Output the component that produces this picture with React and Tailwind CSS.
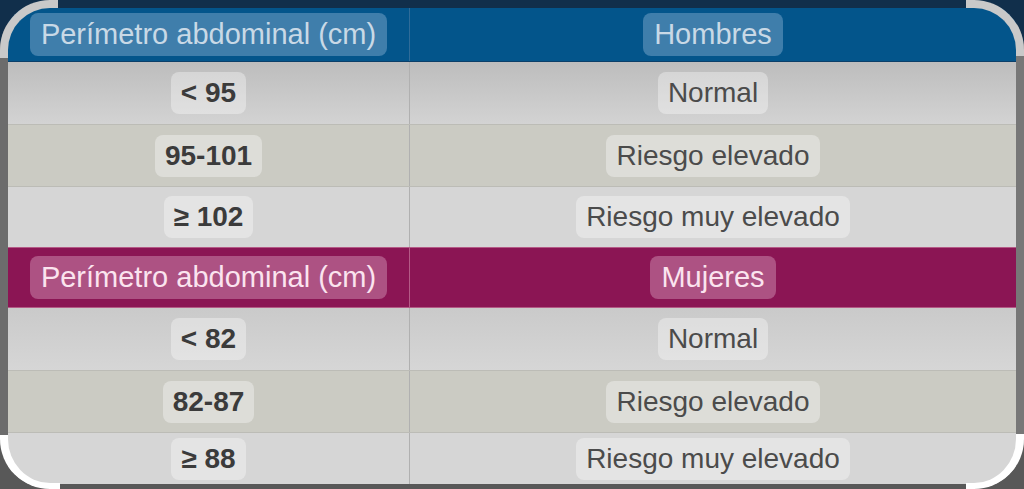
import React from "react";

const font = { fontFamily: '"Liberation Sans", Arial, sans-serif' };

const sections = [
  {
    title: "Hombres",
    headBg: "bg-[#03558b]",
    headBorder: "border-b border-[#0b3f69]",
    divider: "border-[#2f6c99]",
    pill: "bg-[#3f7eab] text-[#c9d9e6]",
    rows: [
      { value: "< 95", label: "Normal", bg: "bg-linear-to-b from-[#bdbdbd] to-[#d3d3d3]", h: "h-[62px]" },
      { value: "95-101", label: "Riesgo elevado", bg: "bg-[#cbcbc3]", h: "h-[62px]" },
      { value: "≥ 102", label: "Riesgo muy elevado", bg: "bg-[#d6d6d6]", h: "h-[61px]" },
    ],
    headH: "h-[54px]",
  },
  {
    title: "Mujeres",
    headBg: "bg-[#8b1554]",
    headBorder: "border-y border-[#b45a86]",
    divider: "border-[#b45a86]",
    pill: "bg-[#ad5283] text-[#fbe4ef]",
    rows: [
      { value: "< 82", label: "Normal", bg: "bg-linear-to-b from-[#cacaca] to-[#d6d6d6]", h: "h-[62px]" },
      { value: "82-87", label: "Riesgo elevado", bg: "bg-[#cbcbc3]", h: "h-[62px]" },
      { value: "≥ 88", label: "Riesgo muy elevado", bg: "bg-[#d6d6d6]", h: "h-[52px]" },
    ],
    headH: "h-[61px]",
  },
];

const Header = ({ s }) => (
  <div className={`flex ${s.headH} ${s.headBg} ${s.headBorder}`}>
    <div className={`w-[402px] flex items-center justify-center border-r ${s.divider}`}>
      <span className={`px-[11px] py-1 rounded-lg text-[29px] leading-[35px] ${s.pill}`}>
        Perímetro abdominal (cm)
      </span>
    </div>
    <div className="flex-1 flex items-center justify-center">
      <span className={`px-[11px] py-1 rounded-lg text-[29px] leading-[35px] ${s.pill}`}>
        {s.title}
      </span>
    </div>
  </div>
);

const Row = ({ row, first }) => (
  <div className={`flex ${row.h} ${row.bg} ${first ? "" : "border-t border-[#bcbcb6]"}`}>
    <div className="w-[402px] flex items-center justify-center border-r border-[#b0b0b0]">
      <span className="px-[10px] py-1 rounded-lg bg-white/35 text-[28px] leading-[34px] font-bold text-[#3b3b3b]">
        {row.value}
      </span>
    </div>
    <div className="flex-1 flex items-center justify-center">
      <span className="px-[10px] py-1 rounded-lg bg-white/35 text-[28px] leading-[34px] text-[#4b4b4b]">
        {row.label}
      </span>
    </div>
  </div>
);

// screen corners drawn over the table
const Corner = ({ pos, ring, shadow }) => (
  <div className={`absolute overflow-hidden ${pos.box}`}>
    <div className={`absolute inset-0 ${pos.ring} ${ring} ${shadow}`} />
  </div>
);

export default function App() {
  return (
    <div className="relative w-[1024px] h-[489px] overflow-hidden bg-[#5a5a5a] flex flex-col" style={font}>
      <div className="h-2 bg-[#112f4b]" />
      <div className="flex flex-1">
        <div className="w-2 bg-[#6c6c6c]" />
        <div className="flex-1 flex flex-col">
          {sections.map((s) => (
            <div key={s.title} className="flex flex-col">
              <Header s={s} />
              {s.rows.map((r, i) => (
                <Row key={r.value} row={r} first={i === 0} />
              ))}
            </div>
          ))}
        </div>
        <div className="w-2 bg-[#777777]" />
      </div>
      <div className="h-[5px] bg-[#585858]" />

      <Corner
        pos={{ box: "top-0 left-0 w-[58px] h-[58px]", ring: "rounded-tl-[50px] border-l-8 border-t-8" }}
        ring="border-[#c9c9c9]"
        shadow="shadow-[0_0_0_60px_#112f4b]"
      />
      <Corner
        pos={{ box: "top-0 right-0 w-[58px] h-[56px]", ring: "rounded-tr-[50px] border-r-8 border-t-8" }}
        ring="border-[#c9c9c9]"
        shadow="shadow-[0_0_0_60px_#112f4b]"
      />
      <Corner
        pos={{ box: "bottom-0 left-0 w-[60px] h-[54px]", ring: "rounded-bl-[50px] border-l-8 border-b-[6px]" }}
        ring="border-white"
        shadow="shadow-[0_0_0_60px_#585858]"
      />
      <Corner
        pos={{ box: "bottom-0 right-0 w-[58px] h-[55px]", ring: "rounded-br-[50px] border-r-8 border-b-[6px]" }}
        ring="border-white"
        shadow="shadow-[0_0_0_60px_#585858]"
      />
    </div>
  );
}
